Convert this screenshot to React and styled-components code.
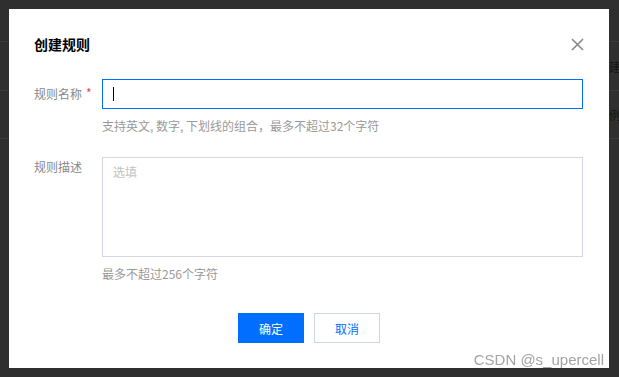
import React from 'react';
import styled, { createGlobalStyle } from 'styled-components';

const GlobalStyle = createGlobalStyle`
  html, body {
    margin: 0;
    padding: 0;
    width: 619px;
    height: 377px;
    overflow: hidden;
    background: #2f2f2f;
    font-family: "Noto Sans CJK SC", "Liberation Sans", sans-serif;
  }
  * {
    box-sizing: border-box;
  }
`;

const Page = styled.div`
  display: flex;
  flex-direction: column;
  height: 377px;
  background: #2f2f2f;
`;

const BgRow = styled.div`
  display: flex;
  align-items: center;
  height: ${props => props.$h}px;
  padding-left: 597px;
  border-bottom: 1px solid #3b3b3b;
  font-size: 12px;
  color: #131313;
  white-space: nowrap;
`;

const Overlay = styled.div`
  position: fixed;
  inset: 0;
  padding: 9px 10px 9px 9px;
`;

const Dialog = styled.div`
  width: 600px;
  height: 359px;
  background: #fff;
  padding: 25px 26px 25px 25px;
  display: flex;
  flex-direction: column;
`;

const Header = styled.div`
  display: flex;
  align-items: center;
  justify-content: space-between;
  height: 20px;
  margin-bottom: 25px;
`;

const Title = styled.h2`
  margin: 0;
  font-size: 14px;
  font-weight: 700;
  line-height: 20px;
  color: #000;
`;

const CloseButton = styled.button`
  display: flex;
  align-items: center;
  justify-content: center;
  width: 14px;
  height: 14px;
  padding: 0;
  margin-right: -1px;
  border: none;
  background: none;
  cursor: pointer;
`;

const Form = styled.div`
  display: flex;
  flex-direction: column;
`;

const FormRow = styled.div`
  display: flex;
  align-items: flex-start;
  margin-bottom: ${props => props.$mb || 0}px;
`;

const Label = styled.label`
  width: 68px;
  flex-shrink: 0;
  font-size: 12px;
  line-height: ${props => props.$lh}px;
  color: #888;
`;

const Required = styled.span`
  color: #e54545;
  margin-left: 4px;
  font-size: 12px;
  position: relative;
  top: -1px;
`;

const Control = styled.div`
  width: 481px;
  display: flex;
  flex-direction: column;
`;

const FakeInput = styled.div`
  height: 30px;
  border: 1px solid #006eff;
  padding-left: 10px;
  display: flex;
  align-items: center;
`;

const Caret = styled.span`
  display: block;
  width: 1px;
  height: 14px;
  background: #000;
`;

const TextArea = styled.textarea`
  display: block;
  width: 481px;
  height: 100px;
  margin: 0;
  padding: 4px 10px;
  border: 1px solid #d3d8e1;
  border-radius: 0;
  resize: none;
  outline: none;
  font-family: "Noto Sans CJK SC", "Liberation Sans", sans-serif;
  font-size: 12px;
  line-height: 20px;
  color: #333;

  &::placeholder {
    color: #c2c2c2;
  }
`;

const Hint = styled.div`
  margin-top: 8px;
  font-size: 12px;
  line-height: 18px;
  color: #999;
`;

const Footer = styled.div`
  display: flex;
  justify-content: center;
  gap: 10px;
  margin-top: 30px;
  padding-left: 1px;
`;

const Button = styled.button`
  width: 66px;
  height: 30px;
  padding: 0;
  font-family: "Noto Sans CJK SC", "Liberation Sans", sans-serif;
  font-size: 12px;
  cursor: pointer;
  border: 1px solid ${props => (props.$primary ? '#006eff' : '#cfd5de')};
  background: ${props => (props.$primary ? '#006eff' : '#fff')};
  color: ${props => (props.$primary ? '#fff' : '#006eff')};
`;

const Watermark = styled.div`
  position: fixed;
  right: 15px;
  bottom: 9px;
  font-family: "Liberation Sans", Arial, sans-serif;
  font-size: 15px;
  line-height: 17px;
  color: #a3a3a3;
`;

const CloseIcon = () => (
  <svg width="13" height="13" viewBox="0 0 13 13">
    <path d="M1 1 L12 12 M12 1 L1 12" stroke="#888" strokeWidth="1.6" fill="none" />
  </svg>
);

const App = () => (
  <>
    <GlobalStyle />
    <Page>
      <BgRow $h={42} />
      <BgRow $h={49}>创建</BgRow>
      <BgRow $h={48}>实例</BgRow>
    </Page>
    <Overlay>
      <Dialog>
        <Header>
          <Title>创建规则</Title>
          <CloseButton aria-label="关闭">
            <CloseIcon />
          </CloseButton>
        </Header>
        <Form>
          <FormRow $mb={22}>
            <Label $lh={30}>
              规则名称<Required>*</Required>
            </Label>
            <Control>
              <FakeInput>
                <Caret />
              </FakeInput>
              <Hint>支持英文, 数字, 下划线的组合，最多不超过32个字符</Hint>
            </Control>
          </FormRow>
          <FormRow>
            <Label $lh={20}>规则描述</Label>
            <Control>
              <TextArea placeholder="选填" />
              <Hint>最多不超过256个字符</Hint>
            </Control>
          </FormRow>
        </Form>
        <Footer>
          <Button $primary>确定</Button>
          <Button>取消</Button>
        </Footer>
      </Dialog>
    </Overlay>
    <Watermark>CSDN @s_upercell</Watermark>
  </>
);

export default App;
